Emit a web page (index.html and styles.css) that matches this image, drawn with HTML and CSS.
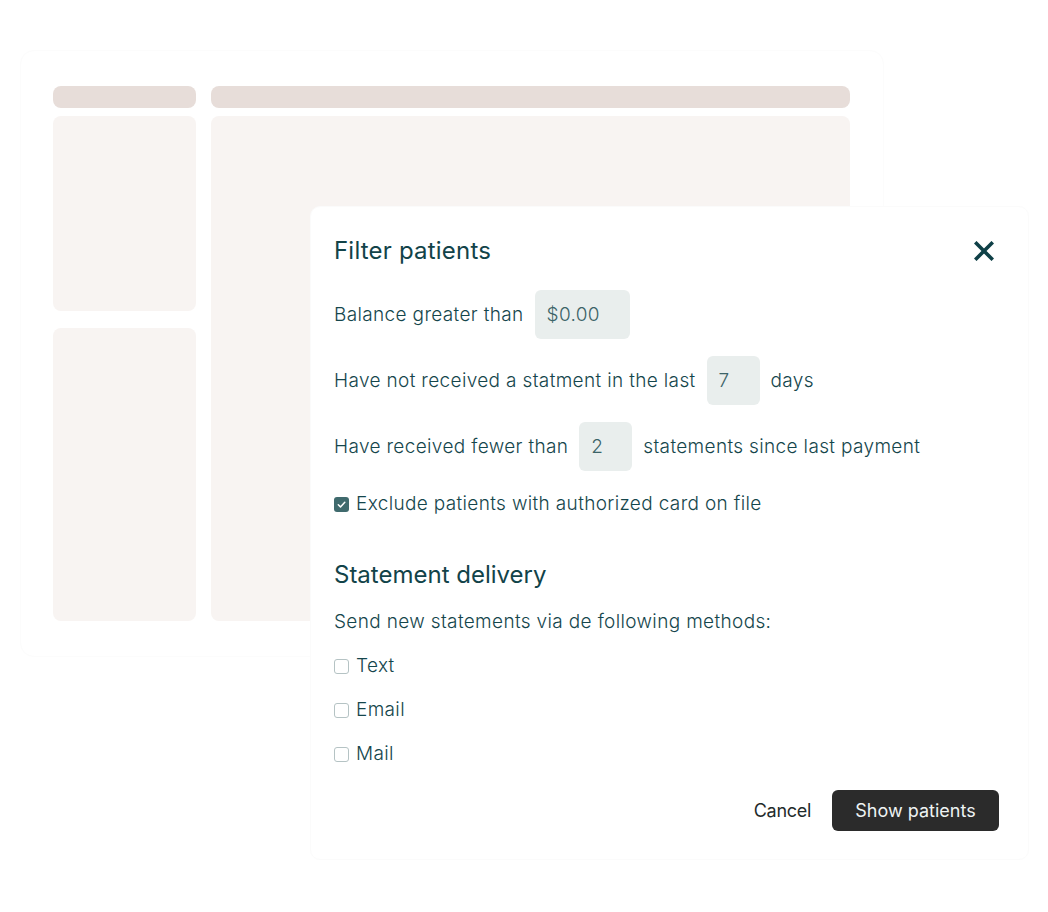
FILE: index.html
```html
<!DOCTYPE html>
<html lang="en">
  <head>
    <meta charset="utf-8" />
    <title>Filter patients</title>
    <link rel="stylesheet" href="styles.css">
  </head>
  <body>
    <div class="stage">
      <!-- faded app behind the dialog -->
      <div class="app">
        <div class="bar"></div>
        <div class="bar"></div>
        <div class="panel side-top"></div>
        <div class="panel main"></div>
        <div class="panel side-bottom"></div>
      </div>

      <!-- filter dialog -->
      <div class="modal">
        <div class="modal-head">
          <h2>Filter patients</h2>
          <button class="close" aria-label="Close">
            <svg viewBox="0 0 20 20" width="20" height="20">
              <path d="M2.5 2.5L17.5 17.5M17.5 2.5L2.5 17.5" stroke="currentColor" stroke-width="3.6" stroke-linecap="square" fill="none"/>
            </svg>
          </button>
        </div>

        <div class="row">
          <span>Balance greater than</span>
          <span class="field wide">$0.00</span>
        </div>
        <div class="row">
          <span>Have not received a statment in the last</span>
          <span class="field">7</span>
          <span>days</span>
        </div>
        <div class="row">
          <span>Have received fewer than</span>
          <span class="field">2</span>
          <span>statements since last payment</span>
        </div>

        <label class="check first">
          <span class="box on">
            <svg viewBox="0 0 15 15" width="15" height="15">
              <path d="M4.3 7.8L6.5 9.9L10.8 5.3" stroke="#fff" stroke-width="1.5" stroke-linecap="round" stroke-linejoin="round" fill="none"/>
            </svg>
          </span>
          Exclude patients with authorized card on file
        </label>

        <h3>Statement delivery</h3>
        <p class="hint">Send new statements via de following methods:</p>

        <label class="check"><span class="box"></span>Text</label>
        <label class="check"><span class="box"></span>Email</label>
        <label class="check"><span class="box"></span>Mail</label>

        <div class="actions">
          <button class="cancel">Cancel</button>
          <button class="primary">Show patients</button>
        </div>
      </div>
    </div>
  </body>
</html>
```

FILE: styles.css
```css
body {
  margin: 0;
  font-family: Inter, 'Noto Sans', sans-serif;
  background: #fff;
  color: #15464c;
}
.stage {
  position: relative;
  width: 1048px;
  height: 912px;
  overflow: hidden;
  padding-top: 50px;
  box-sizing: border-box;
}

/* background app */
.app {
  margin-left: 20px;
  width: 864px;
  height: 607px;
  box-sizing: border-box;
  padding: 35px 33px 35px 32px;
  border: 1px solid #fcfcfc;
  border-radius: 14px;
  display: grid;
  grid-template-columns: 143px 1fr;
  grid-template-rows: 22px 195px 1fr;
  column-gap: 15px;
  row-gap: 8px;
}
.bar {
  background: #e7ddd9;
  border-radius: 8px;
}
.panel {
  background: #f8f4f2;
  border-radius: 8px;
}
.main {
  grid-column: 2;
  grid-row: 2 / 4;
}
.side-bottom {
  grid-column: 1;
  grid-row: 3;
  margin-top: 9px;
}

/* dialog */
.modal {
  position: absolute;
  left: 310px;
  top: 206px;
  width: 719px;
  height: 654px;
  box-sizing: border-box;
  padding: 29px 34px 0 23px;
  background: #fff;
  border: 1px solid #fbfbfb;
  border-radius: 10px;
  display: flex;
  flex-direction: column;
  font-size: 19px;
  font-weight: 300;
  letter-spacing: 0.35px;
}
.modal-head {
  display: flex;
  justify-content: space-between;
  align-items: center;
  height: 30px;
  margin-bottom: 24px;
}
h2, h3 {
  margin: 0;
  font-size: 24px;
  font-weight: 400;
  line-height: 30px;
  letter-spacing: 0.2px;
  color: #124349;
}
h3 {
  letter-spacing: 0;
}
.close {
  border: 0;
  background: none;
  padding: 0;
  color: #0f4047;
  display: flex;
  cursor: pointer;
}
.row {
  display: flex;
  align-items: center;
  gap: 11px;
  height: 49px;
  margin-bottom: 17px;
}
.field {
  display: flex;
  align-items: center;
  box-sizing: border-box;
  width: 53px;
  height: 49px;
  padding: 0 12px;
  border-radius: 6px;
  background: #e9eeed;
  color: #3c6468;
}
.field.wide {
  width: 95px;
}
.check {
  display: flex;
  align-items: center;
  gap: 7px;
  line-height: 24px;
  margin-bottom: 20px;
}
.check.first {
  margin-top: 4px;
  margin-bottom: 44px;
}
.box {
  width: 15px;
  height: 15px;
  box-sizing: border-box;
  border: 1.5px solid #b5c3c4;
  border-radius: 3px;
  display: flex;
}
.box.on {
  border: 0;
  background: #3f6a6d;
}
.hint {
  margin: 20px 0 20px;
  line-height: 24px;
}
.actions {
  display: flex;
  justify-content: flex-end;
  align-items: center;
  gap: 21px;
  margin-top: 4px;
  margin-right: -5px;
}
.actions button {
  font-family: inherit;
  font-size: 18px;
  font-weight: 400;
  border: 0;
  cursor: pointer;
}
.cancel {
  background: none;
  color: #1f2b2b;
  padding: 0;
  letter-spacing: -0.3px;
}
.primary {
  width: 167px;
  height: 41px;
  border-radius: 6px;
  background: #2b2b2b;
  color: #eef3f3;
  letter-spacing: 0;
}
```
